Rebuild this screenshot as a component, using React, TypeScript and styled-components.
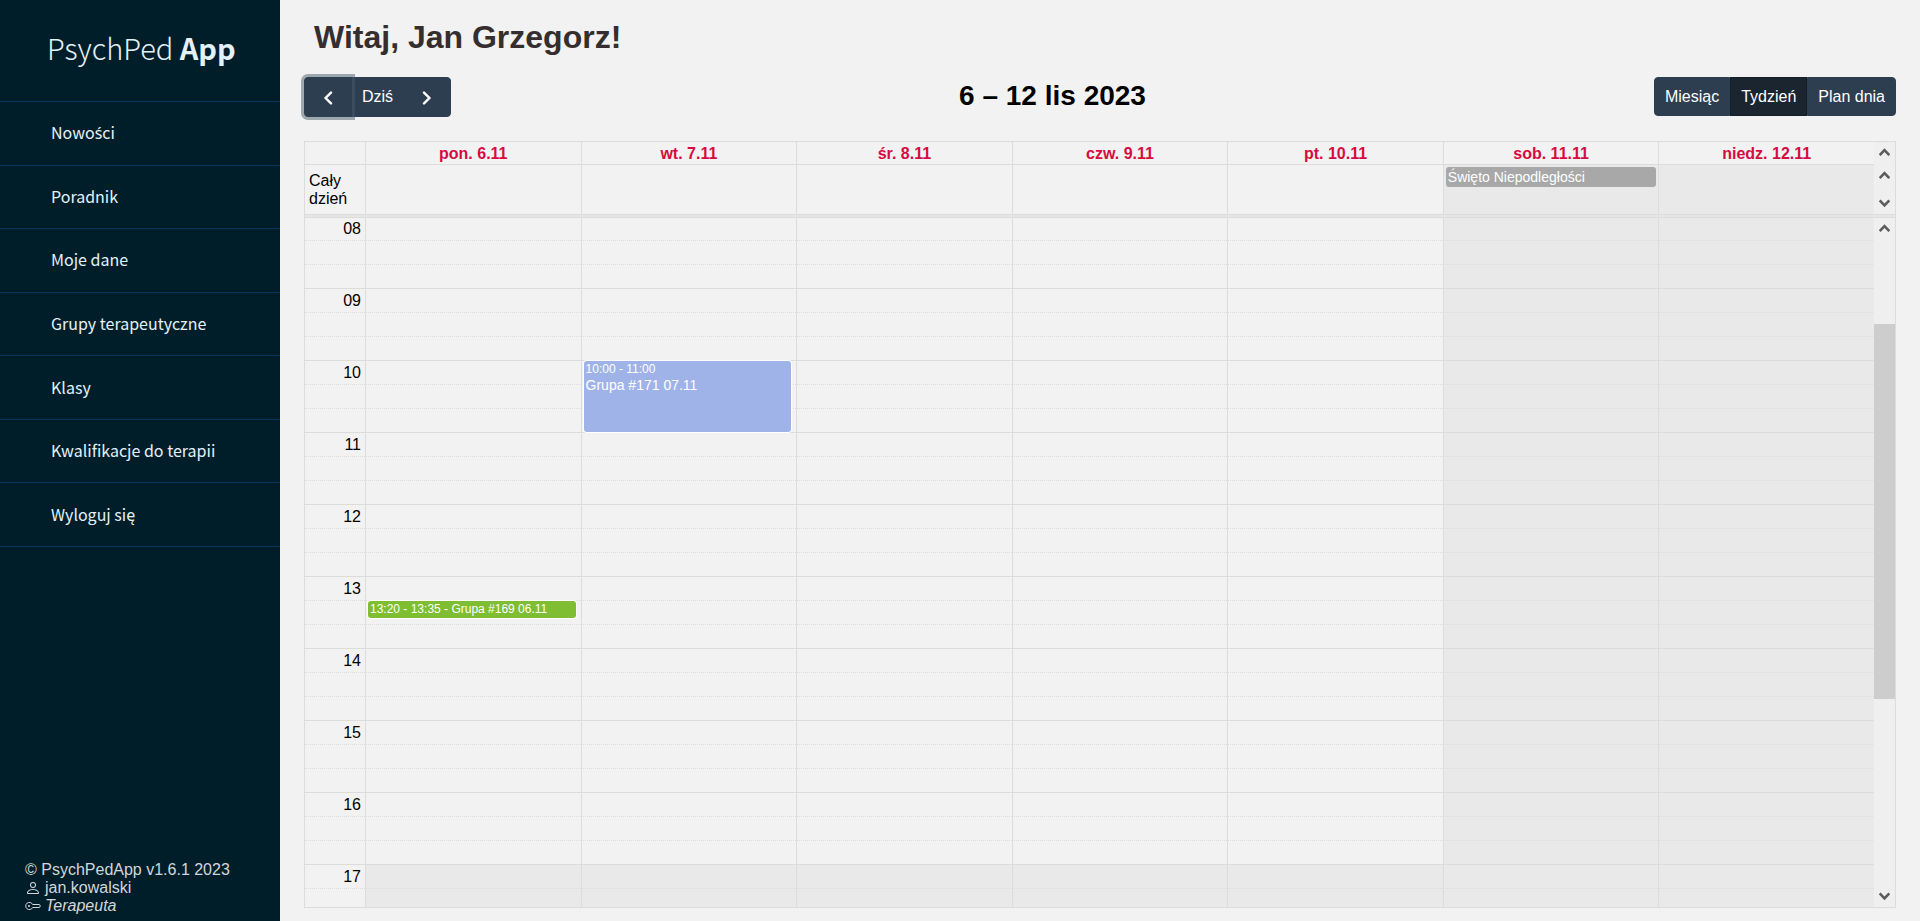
import React from "react";
import styled, { createGlobalStyle, css } from "styled-components";
import { BsPerson } from "react-icons/bs";

const GlobalStyle = createGlobalStyle`
  *, *::before, *::after { box-sizing: border-box; }
  body {
    margin: 0;
    background: #f2f2f2;
    color: #000;
    font: 16px/18px "Liberation Sans", Arial, sans-serif;
  }
`;

const line = "#dcdcdc";
const brandFont = `"Noto Sans CJK SC", "Noto Sans", sans-serif`;

const Page = styled.div`
  display: flex;
  min-height: 100vh;
`;

const Sidebar = styled.aside`
  flex: 0 0 280px;
  display: flex;
  flex-direction: column;
  background: #001e2a;
  color: #e3f1f8;
`;

const Logo = styled.a`
  height: 102px;
  padding-left: 47px;
  border-bottom: 1px solid #003659;
  color: inherit;
  font: 300 29px/94px ${brandFont};
  text-decoration: none;
  white-space: nowrap;

  strong { font-weight: 700; }
`;

const Menu = styled.nav`
  display: grid;
  grid-auto-rows: 1fr;
  height: 445px;
`;

const MenuLink = styled.a`
  display: flex;
  align-items: center;
  padding: 0 0 2px 51px;
  border-bottom: 1px solid #003659;
  color: inherit;
  font: 400 16px/24px ${brandFont};
  text-decoration: none;
`;

const Accented = styled.span`
  font-family: "Noto Sans", sans-serif;
`;

const Footer = styled.footer`
  margin-top: auto;
  padding: 0 25px 6px;
  color: #d3d6d8;
`;

const FooterLine = styled.div`
  display: flex;
  align-items: center;
  gap: 4px;
  height: 18px;
`;

const Main = styled.main`
  flex: 1;
  min-width: 0;
  display: flex;
  flex-direction: column;
  height: 100vh;
  padding: 0 24px 13px;
`;

const Welcome = styled.h1`
  margin: 0;
  padding: 18px 10px 0;
  color: #352e2e;
  font-size: 32px;
  line-height: 38px;
`;

const Toolbar = styled.header`
  display: flex;
  align-items: flex-start;
  justify-content: space-between;
  margin: 21px 0 24px;
  height: 40px;
`;

const Title = styled.h2`
  margin: 0;
  font-size: 28px;
  line-height: 38px;
`;

const Button = styled.button<{ $active?: boolean; $focus?: boolean }>`
  display: flex;
  align-items: center;
  justify-content: center;
  margin: 0;
  padding: 0 10px;
  border: 1px solid ${(p) => (p.$active ? "#151e27" : "#2c3e50")};
  background: ${(p) => (p.$active ? "#1a252f" : "#2c3e50")};
  color: #fff;
  font: inherit;
  &:first-child { border-radius: 4px 0 0 4px; }
  &:last-child { border-radius: 0 4px 4px 0; }
  ${(p) => p.$focus && css`
    position: relative;
    box-shadow: 0 0 0 3px rgba(72, 91, 107, 0.5);
  `}
`;

const ViewButtons = styled.div`
  display: flex;
  height: 39px;
`;

const NavButtons = styled.div`
  display: flex;
  height: 40px;

  ${Button} + ${Button} { margin-left: -1px; }
`;

const IconButton = styled(Button)`
  width: 48px;
  padding: 2px 0 0;
`;

const Calendar = styled.section`
  flex: 1;
  min-height: 0;
  display: flex;
  flex-direction: column;
  border: 1px solid ${line};
`;

const Head = styled.div`
  display: flex;
  flex: none;
`;

const Divider = styled.div`
  flex: none;
  height: 4px;
  border: solid ${line};
  border-width: 1px 0;
  background: #e6e6e6;
`;

const Body = styled.div`
  flex: 1;
  min-height: 0;
  display: flex;
`;

const Viewport = styled.div`
  flex: 1;
  overflow: hidden;
`;

const Grid = styled.table`
  flex: 1;
  width: 100%;
  table-layout: fixed;
  border-collapse: separate;
  border-spacing: 0;
`;

const SlotGrid = styled(Grid)`
  margin-top: -2px;
`;

const AxisCol = styled.col`
  width: 60px;
`;

const DayHead = styled.th`
  height: 22px;
  padding: 2px 0 0;
  border-left: 1px solid ${line};
  color: #d60b41;
`;

const AxisHead = styled.td`
  padding: 0;
`;

const AllDayAxis = styled.th`
  height: 50px;
  padding: 0 4px;
  border-top: 1px solid ${line};
  font-weight: 400;
  text-align: left;
`;

const AllDayCell = styled.td<{ $off: boolean }>`
  padding: 2px;
  border: solid ${line};
  border-width: 1px 0 0 1px;
  background: ${(p) => (p.$off ? "#e9e9e9" : "transparent")};
  vertical-align: top;
`;

const AllDayEvent = styled.div`
  height: 20px;
  padding: 0 2px;
  border-radius: 3px;
  background: #a8a8a8;
  color: #fff;
  font-size: 14px;
  line-height: 20px;
`;

const AxisCell = styled.th<{ $major: boolean }>`
  height: 24px;
  padding: 0 4px;
  border-top: 1px ${(p) => (p.$major ? "solid" : "dotted")} ${line};
  font-weight: 400;
  text-align: right;
`;

const SlotCell = styled.td<{ $major: boolean; $off: boolean }>`
  position: relative;
  height: 24px;
  padding: 0;
  border-top: 1px ${(p) => (p.$major ? "solid" : "dotted")} ${line};
  border-left: 1px solid ${line};
  background: ${(p) => (p.$off ? "#e9e9e9" : "transparent")};
`;

const Event = styled.div<{ $color: string; $height: number }>`
  position: absolute;
  z-index: 1;
  top: 0;
  left: 2px;
  right: 5px;
  height: ${(p) => p.$height}px;
  padding: 1px 2px;
  border-radius: 3px;
  background: ${(p) => p.$color};
  box-shadow: 0 0 0 1px #fff;
  color: #fff;
  font-size: 12px;
  line-height: 15px;
  white-space: nowrap;
`;

const EventTitle = styled.div`
  font-size: 14px;
  line-height: 16px;
`;

const Scroll = styled.div`
  flex: 0 0 21px;
  display: flex;
  flex-direction: column;
  background: #efefef;
`;

const ScrollButton = styled.button`
  display: flex;
  align-items: center;
  justify-content: center;
  flex: none;
  height: 21px;
  padding: 0;
  border: 0;
  background: none;
`;

const HeadScroll = styled(Scroll)`
  gap: 2px;

  ${ScrollButton}:last-child { margin-top: auto; }
`;

const Track = styled.div`
  flex: 1;
  display: grid;
  grid-template-rows: 85fr 375fr 187fr;
`;

const Thumb = styled.div`
  grid-row: 2;
  background: #cdcdcd;
`;

const Arrow = ({ down, label }: { down?: boolean; label: string }) => (
  <ScrollButton type="button" aria-label={label}>
    <svg width="11" height="9" viewBox="0 0 11 9" fill="none" stroke="#5c5c5c" strokeWidth="2.6">
      <path d={down ? "M0.7 1.4 5.5 6.4 10.3 1.4" : "M0.7 7.1 5.5 2.1 10.3 7.1"} />
    </svg>
  </ScrollButton>
);

const Chevron = ({ right }: { right?: boolean }) => (
  <svg width="10" height="14" viewBox="0 0 10 14" fill="none" stroke="currentColor" strokeWidth="2.4" strokeLinecap="round" strokeLinejoin="miter">
    <path d={right ? "M2 1.6 7.4 7 2 12.4" : "M8 1.6 2.6 7 8 12.4"} />
  </svg>
);

const KeyIcon = () => (
  <svg width="16" height="16" viewBox="0 0 16 16" fill="none" stroke="currentColor" strokeWidth="1">
    <path d="M7.6 6.5A3.6 3.6 0 1 0 7.6 9.5H14.4L15.4 8 14.4 6.5Z" />
    <circle cx="4" cy="8" r="1" fill="currentColor" stroke="none" />
  </svg>
);

const links = [
  { id: "news", label: <span>Nowo<Accented>ś</Accented>ci</span> },
  { id: "guide", label: "Poradnik" },
  { id: "profile", label: "Moje dane" },
  { id: "groups", label: "Grupy terapeutyczne" },
  { id: "classes", label: "Klasy" },
  { id: "referrals", label: "Kwalifikacje do terapii" },
  { id: "logout", label: "Wyloguj się" },
];
const days = ["pon. 6.11", "wt. 7.11", "śr. 8.11", "czw. 9.11", "pt. 10.11", "sob. 11.11", "niedz. 12.11"];
const slots = Array.from({ length: 30 }, (_, i) => ({ hour: 8 + Math.floor(i / 3), part: i % 3 }));
const isWeekend = (day: number) => day > 4;

const Columns = () => (
  <colgroup>
    <AxisCol />
    {days.map((d) => <col key={d} />)}
  </colgroup>
);

const slotEvent = (day: number, hour: number, part: number) => {
  if (day === 1 && hour === 10 && part === 0)
    return (
      <Event $color="#9fb3e8" $height={71}>
        10:00 - 11:00
        <EventTitle>Grupa #171 07.11</EventTitle>
      </Event>
    );
  if (day === 0 && hour === 13 && part === 1)
    return <Event $color="#7fbd32" $height={17}>13:20 - 13:35 - Grupa #169 06.11</Event>;
  return null;
};

export default function App() {
  return (
    <Page>
      <GlobalStyle />
      <Sidebar>
        <Logo href="#">PsychPed <strong>App</strong></Logo>
        <Menu>
          {links.map(({ id, label }) => <MenuLink href={`#${id}`} key={id}>{label}</MenuLink>)}
        </Menu>
        <Footer>
          <FooterLine>© PsychPedApp v1.6.1 2023</FooterLine>
          <FooterLine><BsPerson size={16} />jan.kowalski</FooterLine>
          <FooterLine><KeyIcon /><em>Terapeuta</em></FooterLine>
        </Footer>
      </Sidebar>
      <Main>
        <Welcome>Witaj, Jan Grzegorz!</Welcome>
        <Toolbar>
          <NavButtons>
            <IconButton type="button" aria-label="Poprzedni" $focus><Chevron /></IconButton>
            <Button type="button">Dziś</Button>
            <IconButton type="button" aria-label="Następny"><Chevron right /></IconButton>
          </NavButtons>
          <Title>6 – 12 lis 2023</Title>
          <ViewButtons>
            <Button type="button">Miesiąc</Button>
            <Button type="button" $active>Tydzień</Button>
            <Button type="button">Plan dnia</Button>
          </ViewButtons>
        </Toolbar>
        <Calendar>
          <Head>
            <Grid>
              <Columns />
              <thead>
                <tr>
                  <AxisHead />
                  {days.map((d) => <DayHead scope="col" key={d}>{d}</DayHead>)}
                </tr>
              </thead>
              <tbody>
                <tr>
                  <AllDayAxis scope="row">Cały dzień</AllDayAxis>
                  {days.map((d, i) => (
                    <AllDayCell $off={isWeekend(i)} key={d}>
                      {i === 5 && <AllDayEvent>Święto Niepodległości</AllDayEvent>}
                    </AllDayCell>
                  ))}
                </tr>
              </tbody>
            </Grid>
            <HeadScroll>
              <Arrow label="W górę" />
              <Arrow label="W górę" />
              <Arrow label="W dół" down />
            </HeadScroll>
          </Head>
          <Divider />
          <Body>
            <Viewport>
              <SlotGrid>
                <Columns />
                <tbody>
                  {slots.map(({ hour, part }) => (
                    <tr key={`${hour}-${part}`}>
                      <AxisCell scope="row" $major={part === 0}>
                        {part === 0 && String(hour).padStart(2, "0")}
                      </AxisCell>
                      {days.map((d, i) => (
                        <SlotCell key={d} $major={part === 0} $off={isWeekend(i) || hour >= 17}>
                          {slotEvent(i, hour, part)}
                        </SlotCell>
                      ))}
                    </tr>
                  ))}
                </tbody>
              </SlotGrid>
            </Viewport>
            <Scroll>
              <Arrow label="W górę" />
              <Track><Thumb /></Track>
              <Arrow label="W dół" down />
            </Scroll>
          </Body>
        </Calendar>
      </Main>
    </Page>
  );
}
